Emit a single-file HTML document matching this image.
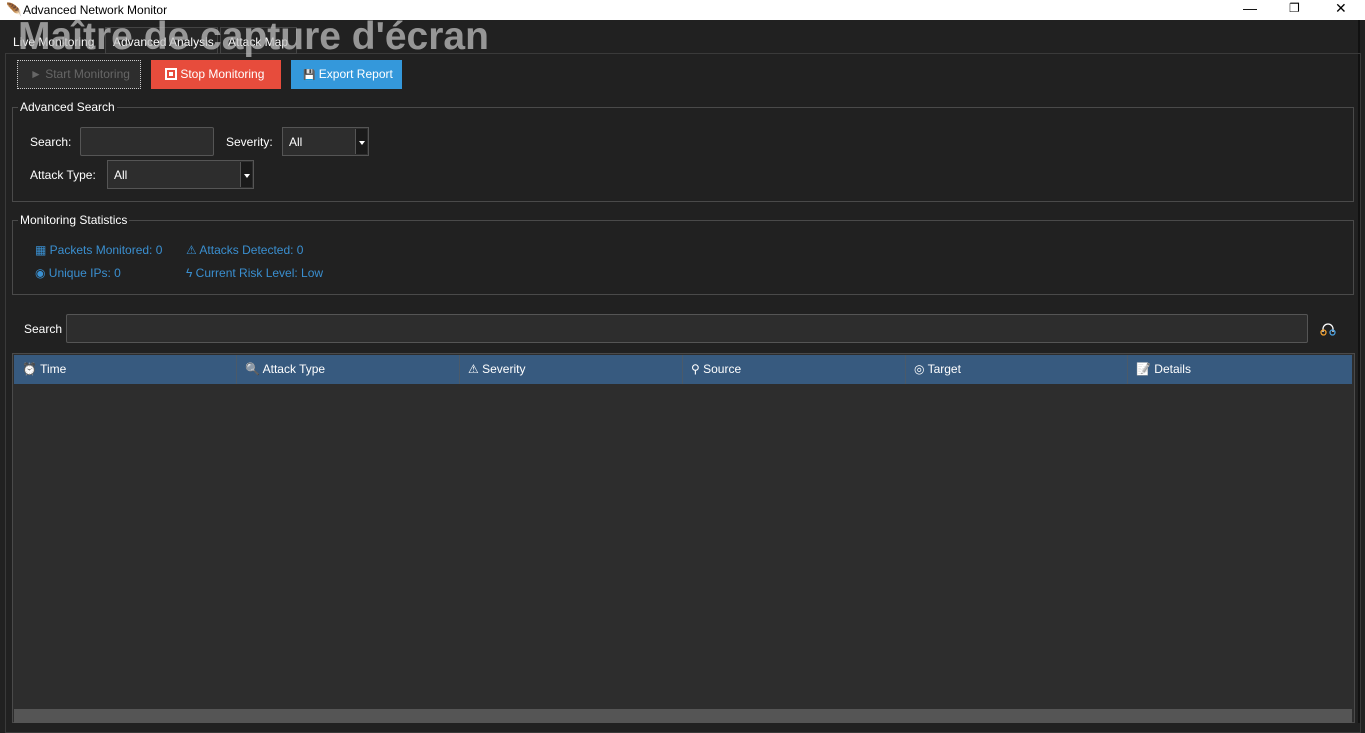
<!DOCTYPE html>
<html><head><meta charset="utf-8"><style>
*{margin:0;padding:0;box-sizing:border-box}
body{width:1365px;height:723px;background:#212121;font-family:"Liberation Sans",sans-serif;font-size:12px;color:#fff;position:relative;overflow:hidden}
.a{position:absolute}
.lf{border:1px solid #4a4a4a}
.lbl{background:#212121;padding:0 2px;color:#fff;font-size:12px}
.inp{background:#2d2d2d;border:1px solid #555;border-radius:2px}
.cb{background:#2d2d2d;border:1px solid #555}
.arr{position:absolute;right:1px;top:1px;bottom:1px;width:12px;background:#1a1a1a;border-left:1px solid #555}
.arr:after{content:"";position:absolute;left:3px;top:12px;border-left:3px solid transparent;border-right:3px solid transparent;border-top:4px solid #fff}
.stat{color:#3a8fd0;font-size:12px}
.th{top:355px;height:29px;background:#375a7f;line-height:29px;padding-left:8px;border-right:1px solid #4a5a6a}
.ic{color:#ccc;filter:grayscale(1)}
</style></head><body>
<div class="a" style="left:0;top:0;width:1365px;height:20px;background:#fff;color:#000">
<span class="a" style="left:6px;top:2px;font-size:13px">&#x1FAB6;</span>
<span class="a" style="left:23px;top:3px;font-size:12px">Advanced Network Monitor</span>
<span class="a" style="left:1243px;top:0;font-size:14px">&#8212;</span>
<span class="a" style="left:1289px;top:1px;font-size:12px">&#10064;</span>
<span class="a" style="left:1335px;top:0;font-size:14px">&#10005;</span>
</div>
<div class="a" style="left:1358px;top:20px;width:2px;height:703px;background:#111"></div>
<div class="a lf" style="left:5px;top:53px;width:1356px;height:680px;border-color:#3a3a3a"></div>
<div class="a" style="left:105px;top:27px;width:113px;height:27px;border:1px solid #444;background:#262626"></div>
<div class="a" style="left:220px;top:27px;width:77px;height:27px;border:1px solid #444;background:#262626"></div>
<span class="a" style="left:13px;top:35px">Live Monitoring</span>
<span class="a" style="left:113px;top:35px">Advanced Analysis</span>
<span class="a" style="left:228px;top:35px">Attack Map</span>
<div class="a" style="left:18px;top:15px;font-size:39px;font-weight:bold;color:rgba(190,190,190,0.75);white-space:nowrap">Maître de capture d'écran</div>

<div class="a" style="left:17px;top:60px;width:124px;height:29px;background:#2d2d2d;border:1px dotted #ccc;color:#666;line-height:27px;padding-left:12px">► Start Monitoring</div>
<div class="a" style="left:151px;top:60px;width:130px;height:29px;background:#e74c3c;line-height:29px;padding-left:14px"><span style="display:inline-block;width:12px;height:12px;border:2px solid #fff;vertical-align:-2px;background:#e74c3c;position:relative"><span style="position:absolute;left:2px;top:2px;width:4px;height:4px;background:#fff"></span></span> Stop Monitoring</div>
<div class="a" style="left:291px;top:60px;width:111px;height:29px;background:#3498db;line-height:29px;padding-left:12px"><span style="font-size:10px">&#128190;</span> Export Report</div>

<div class="a lf" style="left:12px;top:107px;width:1342px;height:95px"></div>
<span class="a lbl" style="left:18px;top:100px">Advanced Search</span>
<span class="a" style="left:30px;top:135px">Search:</span>
<div class="a inp" style="left:80px;top:127px;width:134px;height:29px"></div>
<span class="a" style="left:226px;top:135px">Severity:</span>
<div class="a cb" style="left:282px;top:127px;width:87px;height:29px"><span class="a" style="left:6px;top:7px">All</span><div class="arr"></div></div>
<span class="a" style="left:30px;top:168px">Attack Type:</span>
<div class="a cb" style="left:107px;top:160px;width:147px;height:29px"><span class="a" style="left:6px;top:7px">All</span><div class="arr"></div></div>

<div class="a lf" style="left:12px;top:220px;width:1342px;height:75px"></div>
<span class="a lbl" style="left:18px;top:213px">Monitoring Statistics</span>
<span class="a stat" style="left:35px;top:243px">&#9638; Packets Monitored: 0</span>
<span class="a stat" style="left:186px;top:243px">⚠ Attacks Detected: 0</span>
<span class="a stat" style="left:35px;top:266px">&#9673; Unique IPs: 0</span>
<span class="a stat" style="left:186px;top:266px">ϟ Current Risk Level: Low</span>

<span class="a" style="left:24px;top:322px">Search</span>
<div class="a inp" style="left:66px;top:314px;width:1242px;height:29px"></div>
<svg class="a" style="left:1320px;top:323px" width="16" height="13" viewBox="0 0 16 13"><path d="M3 9 V6 A5 5 0 0 1 13 6 V9" fill="none" stroke="#fff" stroke-width="1.3"/><circle cx="3.5" cy="9.5" r="2.5" fill="none" stroke="#f0a030" stroke-width="1.3"/><circle cx="12.5" cy="9.5" r="2.5" fill="none" stroke="#4aa0e0" stroke-width="1.3"/></svg>

<div class="a" style="left:12px;top:353px;width:1343px;height:370px;background:#2d2d2d;border:1px solid #4a4a4a"></div>
<div class="a th" style="left:14px;width:223px"><span class="ic">⏰</span> Time</div>
<div class="a th" style="left:237px;width:223px"><span class="ic">&#128269;</span> Attack Type</div>
<div class="a th" style="left:460px;width:223px">⚠ Severity</div>
<div class="a th" style="left:683px;width:223px">&#9906; Source</div>
<div class="a th" style="left:906px;width:222px">◎ Target</div>
<div class="a th" style="left:1128px;width:224px;border-right:none"><span class="ic">&#128221;</span> Details</div>
<div class="a" style="left:14px;top:709px;width:1338px;height:14px;background:#555"></div>
</body></html>
